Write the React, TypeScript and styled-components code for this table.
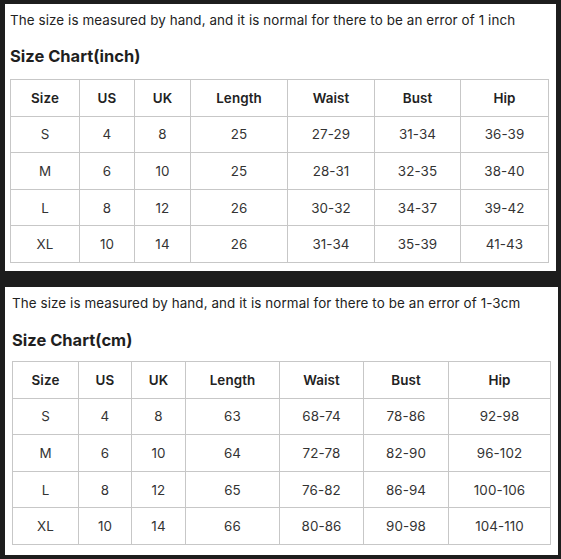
import React from "react";
import styled, { createGlobalStyle } from "styled-components";

const Global = createGlobalStyle`
  html, body { margin: 0; padding: 0; background: #1d1d1d; }
  body { font-family: Inter, "Noto Sans", "Liberation Sans", sans-serif; }
`;

const Page = styled.div`
  display: flex;
  flex-direction: column;
  gap: 16px;
  padding: 4px 0 0 5px;
`;

const Panel = styled.section<{ $w: number; $h: number; $pl: number }>`
  box-sizing: border-box;
  width: ${(p) => p.$w}px;
  height: ${(p) => p.$h}px;
  background: #ffffff;
  padding: 6px 0 0 ${(p) => p.$pl}px;
  display: flex;
  flex-direction: column;
`;

const Note = styled.p`
  margin: 0;
  font-size: 13.4px;
  line-height: 20px;
  letter-spacing: 0.1px;
  color: #222;
  white-space: nowrap;
`;

const Heading = styled.h2<{ $mt: number }>`
  margin: ${(p) => p.$mt}px 0 0 0;
  font-size: 16.5px;
  line-height: 22px;
  font-weight: 700;
  color: #1f1f1f;
`;

const Table = styled.table<{ $mt: number }>`
  margin-top: ${(p) => p.$mt}px;
  border-collapse: collapse;
  table-layout: fixed;
  width: 538px;
`;

const Cell = styled.td<{ $head?: boolean }>`
  border: 1px solid #c7c7c7;
  height: 35.6px;
  padding: 0;
  text-align: center;
  vertical-align: middle;
  font-size: 13.4px;
  letter-spacing: 0.1px;
  font-weight: ${(p) => (p.$head ? 600 : 400)};
  color: ${(p) => (p.$head ? "#222" : "#333")};
`;

const headers = ["Size", "US", "UK", "Length", "Waist", "Bust", "Hip"];

type Chart = {
  note: string;
  title: string;
  widths: number[];
  rows: string[][];
  w: number;
  h: number;
  pl: number;
  mt: number;
  tmt: number;
};

const charts: Chart[] = [
  {
    note: "The size is measured by hand, and it is normal for there to be an error of 1 inch",
    title: "Size Chart(inch)",
    widths: [69, 55, 56, 97, 87, 86, 88],
    rows: [
      ["S", "4", "8", "25", "27-29", "31-34", "36-39"],
      ["M", "6", "10", "25", "28-31", "32-35", "38-40"],
      ["L", "8", "12", "26", "30-32", "34-37", "39-42"],
      ["XL", "10", "14", "26", "31-34", "35-39", "41-43"],
    ],
    w: 551,
    h: 267,
    pl: 5,
    mt: 15,
    tmt: 12,
  },
  {
    note: "The size is measured by hand, and it is normal for there to be an error of 1-3cm",
    title: "Size Chart(cm)",
    widths: [66, 53, 54, 94, 84, 85, 102],
    rows: [
      ["S", "4", "8", "63", "68-74", "78-86", "92-98"],
      ["M", "6", "10", "64", "72-78", "82-90", "96-102"],
      ["L", "8", "12", "65", "76-82", "86-94", "100-106"],
      ["XL", "10", "14", "66", "80-86", "90-98", "104-110"],
    ],
    w: 553,
    h: 268,
    pl: 7,
    mt: 16,
    tmt: 10,
  },
];

function SizeChart({ c }: { c: Chart }) {
  return (
    <Panel $w={c.w} $h={c.h} $pl={c.pl}>
      <Note>{c.note}</Note>
      <Heading $mt={c.mt}>{c.title}</Heading>
      <Table $mt={c.tmt}>
        <colgroup>
          {c.widths.map((w, i) => (
            <col key={i} style={{ width: w }} />
          ))}
        </colgroup>
        <tbody>
          <tr>
            {headers.map((h) => (
              <Cell as="th" $head key={h}>
                {h}
              </Cell>
            ))}
          </tr>
          {c.rows.map((r, i) => (
            <tr key={i}>
              {r.map((v, j) => (
                <Cell key={j}>{v}</Cell>
              ))}
            </tr>
          ))}
        </tbody>
      </Table>
    </Panel>
  );
}

export default function App() {
  return (
    <>
      <Global />
      <Page>
        {charts.map((c) => (
          <SizeChart key={c.title} c={c} />
        ))}
      </Page>
    </>
  );
}
